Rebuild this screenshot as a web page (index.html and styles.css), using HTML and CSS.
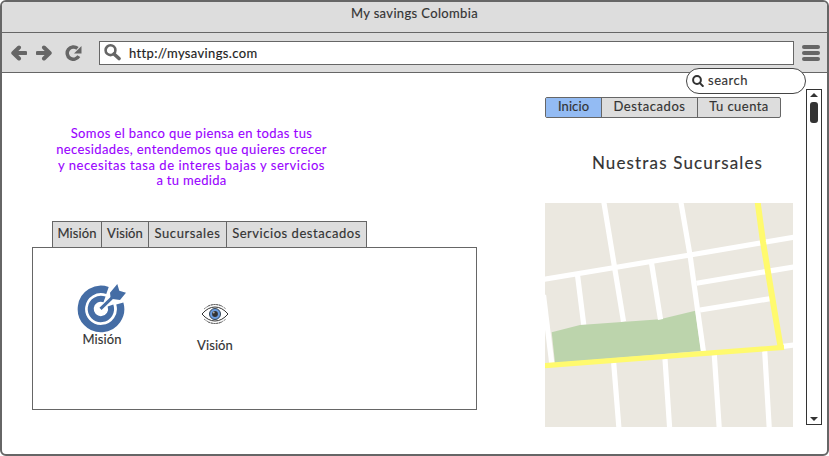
FILE: index.html
```html
<!DOCTYPE html>
<html lang="es">
<head>
<meta charset="utf-8">
<title>My savings Colombia</title>
<link rel="stylesheet" href="styles.css">
</head>
<body>
<div class="window">
  <header class="titlebar"><span class="t-title">My savings Colombia</span></header>
  <div class="toolbar">
    <svg class="ico-back" width="16" height="16" viewBox="0 0 16 16"><path d="M8 2.500 2.300 8 8 13.500M3 8H14.500" /></svg>
    <svg class="ico-fwd" width="16" height="16" viewBox="0 0 16 16"><path d="M8 2.500 13.700 8 8 13.500M13 8H1.500" /></svg>
    <svg class="ico-reload" width="17" height="16" viewBox="0 0 17 16"><path class="arc" d="M13.800 11.200A6.200 6.200 0 1 1 12.500 3.400" /><path class="tip" d="M16.500 1V8.500H9Z" /></svg>
    <div class="address">
      <svg width="17" height="17" viewBox="0 0 17 17"><circle cx="6.500" cy="6.200" r="4.900" /><path d="M10 10 15 14.500" /></svg>
      <span class="t-url">http://mysavings.com</span>
    </div>
    <div class="menu"><i></i><i></i><i></i></div>
  </div>
  <main class="content">
    <section class="left">
      <p class="intro">
        <span class="l1">Somos el banco que piensa en todas tus</span><br>
        <span class="l2">necesidades, entendemos que quieres crecer</span><br>
        <span class="l3">y necesitas tasa de interes bajas y servicios</span><br>
        <span class="l4">a tu medida</span>
      </p>
      <nav class="tabs">
        <a class="tab1"><span>Misión</span></a><a class="tab2"><span>Visión</span></a><a class="tab3"><span>Sucursales</span></a><a class="tab4"><span>Servicios destacados</span></a>
      </nav>
      <div class="panel">
        <figure class="mision">
          <svg width="50" height="50" viewBox="0 0 50 50">
            <path class="ring" d="M42.800 20.500A19.600 19.600 0 1 1 30.500 7.500" />
            <path class="ring inner" d="M33.500 22.500A10.200 10.200 0 1 1 27.500 16.400" />
            <path class="dart-line" d="M23.500 25.800 37 12.800" />
            <path class="dart" d="M33 9.700 40.300 1 42.300 7.700 49 9.700 43 17 33.700 15.700Z" />
          </svg>
          <figcaption>Misión</figcaption>
        </figure>
        <figure class="vision">
          <svg width="28" height="24" viewBox="0 0 28 24">
            <path class="lid" d="M1 12Q7 5 14 5T27 12Q21 19 14 19T1 12Z" />
            <path class="brow" d="M3 7Q14-2 25 7M3 17Q14 26 25 17M7 4Q14 1 21 4M7 20Q14 23 21 20" />
            <circle class="iris" cx="14" cy="12" r="5.500" />
            <circle class="pupil" cx="14" cy="12" r="2.900" />
            <circle class="glint" cx="12.700" cy="10.500" r="1" />
          </svg>
          <figcaption>Visión</figcaption>
        </figure>
      </div>
    </section>
    <section class="right">
      <nav class="buttons">
        <a class="b1 on"><span>Inicio</span></a><a class="b2"><span>Destacados</span></a><a class="b3"><span>Tu cuenta</span></a>
      </nav>
      <h1><span>Nuestras Sucursales</span></h1>
      <svg class="map" width="248" height="224" viewBox="0 0 248 224">
        <rect width="248" height="224" fill="#ebe8e0" />
        <path class="park" d="M6.700 129.300 35 122 76.700 119 115 116.300 150.300 107.700 156 148 10 160Z" />
        <g class="road">
          <path d="M-2 76.500 70 64.500 145 52 250 34" />
          <path d="M59 -2V0L70.500 70 78.500 118.500" />
          <path d="M135.700 -2 145 52 153 110 158.500 149" />
          <path d="M32.500 72 38.700 121.500" />
          <path d="M106.500 60 115.500 116.500" />
          <path d="M-1.500 92 6.700 160" />
          <path d="M151.500 80.300 250 63.700" />
          <path d="M155 107 225 95.700" />
          <path d="M238 143.300 250 142" />
          <path d="M68.700 160 74 226M120 156 124.700 226M169.300 152 174.300 226M219.700 148 224.300 226" />
        </g>
        <path class="highway" d="M212.500 -2 218 38.700 231 117 235.700 144.500" />
        <path class="highway flat" d="M-2 162.800 239 144.300" />
      </svg>
    </section>
    <div class="scroll"><i class="up"></i><i class="thumb"></i><i class="down"></i></div>
  </main>
  <div class="search">
    <svg width="12" height="12" viewBox="0 0 12 12"><circle cx="5" cy="5" r="3.900" /><path d="M7.700 7.900 10.800 11" /></svg>
    <span>search</span>
  </div>
</div>
</body>
</html>
```
FILE: styles.css
```css
* { box-sizing: border-box; }
body { margin: 0; background: #fff; font: 13px/16px Lato, "Liberation Sans", sans-serif; font-weight: 400; color: #333; overflow: hidden; -webkit-text-stroke: 0.15px currentColor; }
svg { display: block; fill: none; flex: none; }
span, figcaption { white-space: nowrap; }
.window { position: relative; width: 829px; height: 456px; border: 2px solid #666; border-radius: 6px; overflow: hidden; background: #fff; }
.titlebar { height: 31px; background: #ddd; border-bottom: 1px solid #666; text-align: center; padding-top: 3px; }
.t-title { letter-spacing: 0.36px; }
.toolbar { height: 40px; background: #ddd; border-bottom: 1px solid #666; display: flex; align-items: center; padding: 0 7px 0 9px; }
.toolbar > svg { stroke: #666; stroke-width: 4; }
.ico-back path, .ico-fwd path { stroke-linecap: round; stroke-linejoin: round; }
.ico-fwd { margin-left: 9px; }
.ico-reload { margin-left: 13px; }
.toolbar .ico-reload .arc { stroke-width: 3.500; }
.toolbar .ico-reload .tip { fill: #666; stroke: none; }
.address { margin-left: 17px; width: 695px; height: 24px; border: 1px solid #666; background: #fff; display: flex; align-items: center; padding-left: 4px; color: #222; }
.address svg { stroke: #666; stroke-width: 2.600; }
.address path { stroke-width: 3.600; stroke-linecap: round; }
.t-url { margin-left: 8px; letter-spacing: 0.36px; }
.menu { margin-left: 8px; display: grid; gap: 2px; }
.menu i { width: 18px; height: 4px; border-radius: 2px; background: #666; }
.content { display: flex; height: 381px; }
.left { width: 445px; margin-left: 30px; }
.intro { margin: 53px 0 0; width: 319px; height: 95px; text-align: center; line-height: 15.800px; color: #90f; -webkit-text-stroke: 0.1px currentColor; }
.l1, .l2 { letter-spacing: 0.39px; }
.l3 { letter-spacing: 0.54px; }
.l4 { letter-spacing: 0.3px; }
.tabs { display: flex; margin-left: 20px; height: 26px; }
.tabs a { border: 1px solid #666; border-bottom: 0; border-right: 0; background: #ddd; text-align: center; padding-top: 3px; }
.tabs a:last-child { border-right: 1px solid #666; }
.tab1 { width: 49px; } .tab2 { width: 47px; } .tab3 { width: 78px; } .tab4 { width: 141px; }
.tab1, .tab2, figcaption { letter-spacing: 0.1px; }
.tab3 { letter-spacing: 0.6px; }
.tab4 { letter-spacing: 0.54px; }
.panel { height: 163px; border: 1px solid #666; display: flex; align-items: flex-start; }
figure { margin: 0; display: flex; flex-direction: column; align-items: center; }
.mision { margin: 35px 0 0 44px; width: 50px; }
.mision figcaption { margin-top: -2px; }
.ring { stroke: #456da5; stroke-width: 7.400; }
.ring.inner { stroke-width: 6; }
.dart-line { stroke: #456da5; stroke-width: 3; }
.dart { fill: #456da5; }
.vision { margin: 54px 0 0 74px; width: 28px; }
.vision figcaption { margin-top: 11px; }
.lid { stroke: #333; stroke-width: 1; }
.brow { stroke: #555; stroke-width: 0.800; stroke-dasharray: 2 0.700; }
.iris { fill: #6c9de0; stroke: #345; stroke-width: 1; }
.pupil { fill: #333; }
.glint { fill: #aaa; }
.right { width: 248px; margin-left: 68px; }
.buttons { display: flex; margin-top: 24px; height: 21px; width: 236px; border: 1px solid #666; border-radius: 2px; background: #ddd; overflow: hidden; }
.buttons a { text-align: center; flex: none; }
.buttons a + a { border-left: 1px solid #666; }
.buttons .on { background: #93bbf3; }
.b1 { width: 55px; letter-spacing: 0.1px; } .b2 { width: 96px; letter-spacing: 0.58px; } .b3 { width: 83px; letter-spacing: 0.45px; }
h1 { margin: 34px 0 0; padding-left: 17px; height: 51px; text-align: center; font-size: 17px; line-height: 22px; font-weight: 400; letter-spacing: 1.150px; }
.road { stroke: #fff; stroke-width: 5.200; }
.park { fill: #bcd4ac; }
.highway { stroke: #fffa6e; stroke-width: 6; }
.highway.flat { stroke-width: 5.200; }
.scroll { margin: 16px 0 0 13px; width: 16px; height: 336px; border: 1px solid #333; display: flex; flex-direction: column; align-items: center; }
.up { margin-top: 3px; border: 4px solid transparent; border-top: 0; border-bottom: 4px solid #333; }
.thumb { margin-top: 5px; width: 8px; height: 21px; border-radius: 3px; background: #333; }
.down { margin: auto 0 3px; border: 4px solid transparent; border-bottom: 0; border-top: 4px solid #333; }
.search { position: absolute; left: 684px; top: 66px; width: 120px; height: 26px; border: 1px solid #444; border-radius: 13px; background: #fff; display: flex; align-items: center; padding-left: 5px; }
.search svg { stroke: #333; stroke-width: 2; }
.search path { stroke-linecap: round; }
.search span { margin-left: 4px; letter-spacing: 0.5px; padding-bottom: 2px; }
```
